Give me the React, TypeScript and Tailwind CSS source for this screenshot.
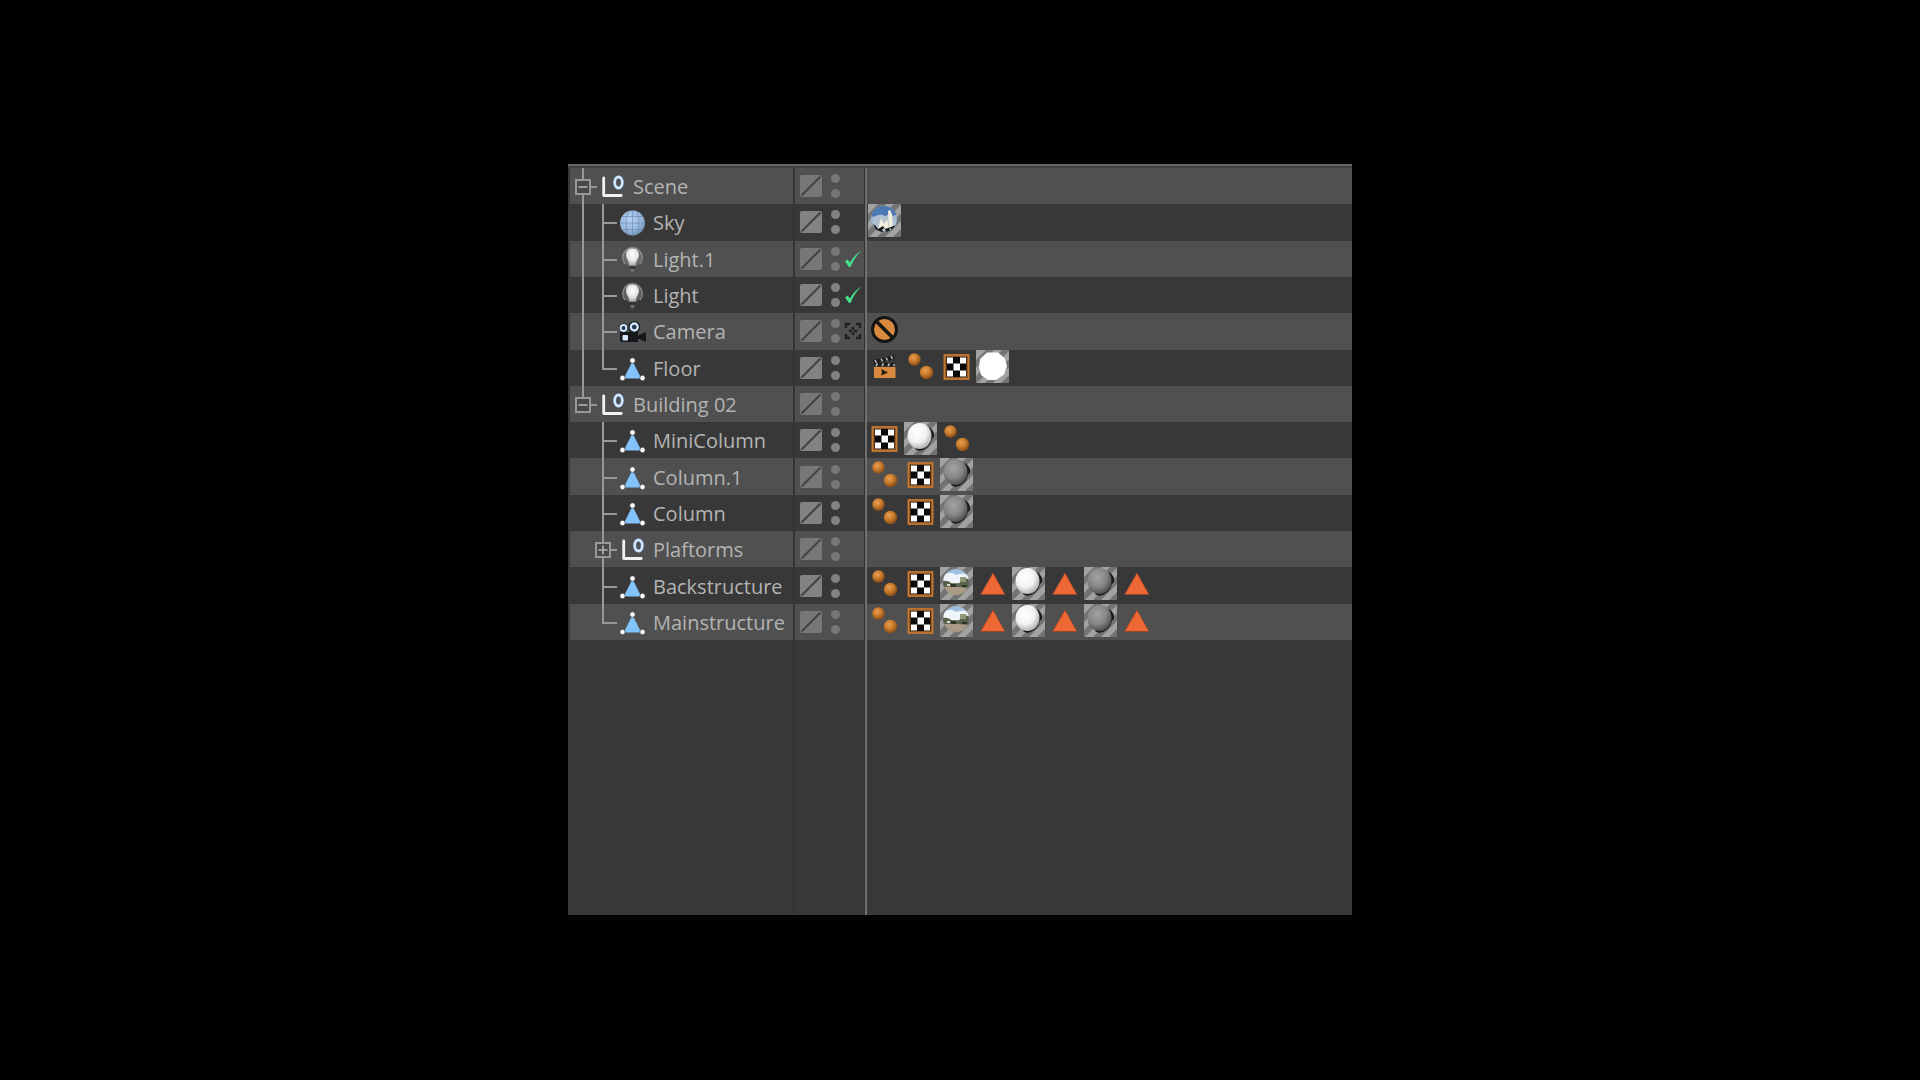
import { useId } from "react";

type Tag = "compositing" | "phong" | "uvw" | "white" | "matte" | "grey" | "env" | "sky" | "selection" | "protection";
type Icon = "null" | "sky" | "light" | "camera" | "polygon";
type Guide = "none" | "line" | "tee" | "end";
type Item = {
  name: string;
  icon: Icon;
  guides: Guide[];
  expander?: "open" | "closed";
  state?: "check" | "target";
  tags: Tag[];
};

const items: Item[] = [
  { name: "Scene", icon: "null", guides: ["line"], expander: "open", tags: [] },
  { name: "Sky", icon: "sky", guides: ["line", "tee"], tags: ["sky"] },
  { name: "Light.1", icon: "light", guides: ["line", "tee"], state: "check", tags: [] },
  { name: "Light", icon: "light", guides: ["line", "tee"], state: "check", tags: [] },
  { name: "Camera", icon: "camera", guides: ["line", "tee"], state: "target", tags: ["protection"] },
  { name: "Floor", icon: "polygon", guides: ["line", "end"], tags: ["compositing", "phong", "uvw", "white"] },
  { name: "Building 02", icon: "null", guides: ["end"], expander: "open", tags: [] },
  { name: "MiniColumn", icon: "polygon", guides: ["none", "tee"], tags: ["uvw", "matte", "phong"] },
  { name: "Column.1", icon: "polygon", guides: ["none", "tee"], tags: ["phong", "uvw", "grey"] },
  { name: "Column", icon: "polygon", guides: ["none", "tee"], tags: ["phong", "uvw", "grey"] },
  { name: "Plaftorms", icon: "null", guides: ["none", "line"], expander: "closed", tags: [] },
  { name: "Backstructure", icon: "polygon", guides: ["none", "tee"], tags: ["phong", "uvw", "env", "selection", "matte", "selection", "grey", "selection"] },
  { name: "Mainstructure", icon: "polygon", guides: ["none", "end"], tags: ["phong", "uvw", "env", "selection", "matte", "selection", "grey", "selection"] },
];

function ObjectIcon({ icon }: { icon: Icon }) {
  const id = useId();
  return (
    <svg className="size-[26px] shrink-0 overflow-visible" viewBox="0 0 26 26" aria-hidden="true">
      {icon === "null" && (
        <>
          <path d="M4.700 4v17.500h17.500" fill="none" stroke="#f2f2f2" strokeWidth="2.800" strokeLinecap="round" strokeLinejoin="round" />
          <ellipse cx="19.500" cy="8.500" rx="4" ry="5.600" fill="none" stroke="#3b5878" strokeWidth="4.400" opacity="0.45" />
          <ellipse cx="19.500" cy="8.500" rx="3.800" ry="5.500" fill="none" stroke="#cfe6ff" strokeWidth="2.800" />
        </>
      )}
      {icon === "sky" && (
        <>
          <defs>
            <radialGradient id={id} cx="0.4" cy="0.35" r="0.7">
              <stop offset="0" stopColor="#b8d1ee" />
              <stop offset="0.65" stopColor="#96b6db" />
              <stop offset="1" stopColor="#6d8db3" />
            </radialGradient>
          </defs>
          <circle cx="13.500" cy="13" r="12.500" fill={`url(#${id})`} />
          <path d="M13.500 .5v25M1 13h25M3 6.500h21M3 19.500h21M9 1.500q-4 11.500 0 23M18 1.500q4 11.500 0 23" fill="none" stroke="#6487b0" strokeWidth="1" opacity="0.6" />
        </>
      )}
      {icon === "light" && (
        <>
          <defs>
            <radialGradient id={id} cx="0.5" cy="0.35" r="0.65">
              <stop offset="0" stopColor="#ffffff" />
              <stop offset="0.6" stopColor="#e6e6e6" />
              <stop offset="1" stopColor="#a8a8a8" />
            </radialGradient>
          </defs>
          <circle cx="13.500" cy="9.500" r="10" fill="#858585" opacity="0.5" />
          <path d="M6 17a9.800 9.800 0 1 1 15 0" fill="none" stroke="#a0a0a0" strokeWidth="1.200" opacity="0.8" />
          <path d="M13.500 1.500c-4 0-6.500 2.800-6.500 6.200 0 4 3 5.500 3.200 10.800h6.600c.2-5.300 3.200-6.800 3.200-10.800 0-3.400-2.500-6.200-6.500-6.200z" fill={`url(#${id})`} />
          <path d="M10.500 19.500h6v2h-6z" fill="#303030" />
          <path d="M11 22h5l-1.500 3.500h-2z" fill="#6d6d6d" />
        </>
      )}
      {icon === "camera" && (
        <>
          <path d="M1 13h18v10H3q-2 0-2-2zM19 16.500l8-3.500v10l-8-3.500z" fill="#16181c" />
          <circle cx="4.500" cy="9" r="4.600" fill="#17191d" />
          <circle cx="15.300" cy="8" r="6" fill="#17191d" />
          <circle cx="4.500" cy="9" r="2.900" fill="#24354c" stroke="#cfe3fa" strokeWidth="2" />
          <circle cx="15.300" cy="8" r="3.500" fill="#24354c" stroke="#cfe3fa" strokeWidth="2.300" />
          <rect x="3.500" y="16" width="5.500" height="5.500" rx="1" fill="#d8e9fb" />
        </>
      )}
      {icon === "polygon" && (
        <>
          <path d="M13.500 6 21.500 22h-16z" fill="#82c3fb" stroke="#82c3fb" strokeWidth="1" strokeLinejoin="round" />
          <circle cx="13.500" cy="4.500" r="2.700" fill="#fff" stroke="#262626" strokeWidth="0.600" />
          <circle cx="3.500" cy="22" r="2.700" fill="#fff" stroke="#262626" strokeWidth="0.600" />
          <circle cx="23.500" cy="22" r="2.700" fill="#fff" stroke="#262626" strokeWidth="0.600" />
        </>
      )}
    </svg>
  );
}

function MaterialBall({ kind }: { kind: Tag }) {
  const id = useId();
  const clip = `${id}-clip`;
  const light = kind === "matte";
  return (
    <>
      <defs>
        <radialGradient id={id} cx="0.4" cy="0.35" r="0.65">
          <stop offset="0" stopColor={light ? "#ffffff" : "#a2a2a2"} />
          <stop offset="0.6" stopColor={light ? "#f2f2f2" : "#868686"} />
          <stop offset="1" stopColor={light ? "#b4b4b4" : "#525252"} />
        </radialGradient>
        <clipPath id={clip}>
          <circle cx="16" cy="15" r="13" />
        </clipPath>
      </defs>
      <rect width="33" height="33" fill="#a2a2a2" />
      <path d="M0 10 10 0h8L0 18zM0 26 26 0h7v1L1 33H0zM9 33 33 9v8L17 33zM25 33l8-8v8z" fill="#747474" />
      {kind === "white" && <path d="M11 2.500h11l7 6 2 8-3 8-8 5.500h-8L5 25 3 17l1-8z" fill="#fff" />}
      {(kind === "matte" || kind === "grey") && (
        <>
          <path d="M25 5q6 4 5 10l-2 2q-2 8-9 11-5 2-8-1z" fill="#1a1a1a" />
          <ellipse cx="15.500" cy="14" rx="12" ry="13" fill={`url(#${id})`} />
        </>
      )}
      {kind === "env" && (
        <g clipPath={`url(#${clip})`}>
          <rect width="33" height="33" fill="#87806f" />
          <path d="M0 0h33v15H0z" fill="#9fbee0" />
          <path d="M3 9q7-6 13-1 8-4 14 2l-2 6H4z" fill="#eef4f8" />
          <path d="M3 14q6-1 10 4l6-1 3-6 8 1 1 7-8 3-12-2-8 1z" fill="#56614a" />
          <path d="M4 20q10-1 24 1l-5 8H10z" fill="#ab9a86" />
          <path d="M20 10h6v5h-6z" fill="#8d9a74" />
          <path d="M11 17h5v3h-5zM22 18h5v2h-5z" fill="#30342a" />
          <path d="M7 17h3v2H7z" fill="#d7dbd2" />
        </g>
      )}
      {kind === "sky" && (
        <g clipPath={`url(#${clip})`}>
          <rect width="33" height="33" fill="#9fb6cf" />
          <path d="M0 0h33v10Q17 14 0 12z" fill="#4a78b5" />
          <path d="M5 14q6-6 12-2l5-2 6 5v8H5z" fill="#aebfce" />
          <path d="m10 25 3-11 3 6 3-5 2 10zM20 7l2-1 2 4 1 14h-4z" fill="#f1eddc" />
          <path d="M5 20q4 2 5 5l5-3 2 3 6-2 5-2-3 8H9z" fill="#15191e" />
          <path d="m14 26 2-2 2 3-2 1zM21 25l2-1v3z" fill="#cfcfc9" />
        </g>
      )}
    </>
  );
}

function TagIcon({ kind }: { kind: Tag }) {
  const id = useId();
  const ball = kind === "white" || kind === "matte" || kind === "grey" || kind === "env" || kind === "sky";
  return (
    <svg className="size-[33px] shrink-0" viewBox="0 0 33 33" role="img" aria-label={kind}>
      {ball && <MaterialBall kind={kind} />}
      {kind === "phong" && (
        <>
          <defs>
            <radialGradient id={id} cx="0.4" cy="0.35" r="0.65">
              <stop offset="0" stopColor="#e89e50" />
              <stop offset="0.5" stopColor="#cb7c2f" />
              <stop offset="1" stopColor="#874c16" />
            </radialGradient>
          </defs>
          <circle cx="10.500" cy="9.500" r="6.200" fill={`url(#${id})`} />
          <circle cx="22.500" cy="22.500" r="6.700" fill={`url(#${id})`} />
        </>
      )}
      {kind === "uvw" && (
        <>
          <rect x="3.500" y="4" width="26" height="26" rx="1" fill="#8a5320" />
          <rect x="4.500" y="5" width="24" height="24" fill="none" stroke="#c27a38" strokeWidth="1.600" />
          <rect x="6.500" y="7" width="20" height="20" fill="#0a0a0a" />
          <path d="M7 7.500h6v6H7zM20 7.500h6v6h-6zM13.500 13.500h6.500V20.500h-6.500zM7 20.500h6v6H7zM20 20.500h6v6h-6z" fill="#fff" />
        </>
      )}
      {kind === "selection" && <path d="M17 6 29 27.500H4.500z" fill="#ee6835" stroke="#8f4128" strokeWidth="0.800" />}
      {kind === "protection" && (
        <>
          <circle cx="16.500" cy="16.500" r="12" fill="#d98a3e" stroke="#151515" strokeWidth="3" />
          <path d="m8.500 8.500 16 16" stroke="#151515" strokeWidth="3.500" />
        </>
      )}
      {kind === "compositing" && (
        <>
          <path d="M6 17h21.500v11H6z" fill="#d98a3e" />
          <path d="m13 19 7 3.500-7 3 1-3z" fill="#231a12" />
          <path d="m5 10 21-5 1 4-21 5zM6 13h21v3H6z" fill="#1c1c1c" />
          <path d="m7 10 1.500 3M13 8.500l1.500 3M18 7.500l1.500 3M23 6l1.500 3M8 16l1.500-2.500M14 16l1.500-2.500M20 16l1.500-2.500M25.500 16l1-2" stroke="#c0c0c0" strokeWidth="1.500" />
        </>
      )}
    </svg>
  );
}

function GuideCell({ guide, branch, expander, name }: { guide: Guide; branch: boolean; expander?: Item["expander"]; name: string }) {
  return (
    <span className="relative flex w-5 shrink-0 items-center justify-center self-stretch">
      {(guide === "line" || guide === "tee") && <span className="absolute inset-y-0 left-[9px] w-0.5 bg-[#989898]" />}
      {guide === "end" && <span className="absolute top-0 bottom-1/2 left-[9px] w-0.5 bg-[#989898]" />}
      {branch && <span className="absolute top-1/2 left-[9px] h-0.5 w-[15px] bg-[#989898]" />}
      {expander && (
        <button
          type="button"
          aria-label={`${expander === "open" ? "Collapse" : "Expand"} ${name}`}
          className="relative top-px flex size-4 shrink-0 items-center justify-center border-2 border-[#989898] bg-[#484848]"
        >
          <svg viewBox="0 0 12 12" className="size-3 shrink-0" aria-hidden="true">
            <path d={expander === "open" ? "M1.500 6h9" : "M1.500 6h9M6 1.500v9"} stroke="#b4b4b4" strokeWidth="1.600" />
          </svg>
        </button>
      )}
    </span>
  );
}

function StateMark({ state }: { state: "check" | "target" }) {
  return (
    <button type="button" aria-label={state === "check" ? "Enabled" : "Active camera"} className="ml-1 size-[18px] shrink-0">
      <svg viewBox="0 0 18 18" className="size-full" aria-hidden="true">
        {state === "check" ? (
          <path d="M1 11.500 3.500 9.500 6 12.500Q10 5 17.500.500 10.500 7 6.500 17h-1.500z" fill="#45e08c" />
        ) : (
          <path d="M2 6V2h4M12 2h4v4M16 12v4h-4M6 16H2v-4M9 5v3M9 10v3M5 9h3M10 9h3" fill="none" stroke="#202020" strokeWidth="2.400" />
        )}
      </svg>
    </button>
  );
}

export default function App() {
  return (
    <main className="flex min-h-screen items-start justify-center bg-black pt-41 font-['Open_Sans',sans-serif]">
      <section aria-label="Object manager" className="flex min-h-[751px] w-full max-w-[784px] flex-col border-t-2 border-[#666666] bg-[#383838]">
        <div className="h-0.5 bg-[#404040]" />
        <div className="relative grow">
          <div className="absolute inset-y-0 left-[225px] w-0.5 bg-[#343434]" />
          <ul className="grid h-[472px] auto-rows-fr">
            {items.map((item) => (
              <li key={item.name} className="group flex items-stretch pl-0.5">
                <div className="flex w-[223px] shrink-0 items-center pl-[3px] group-odd:bg-[#505050]">
                  {item.guides.map((guide, i) => (
                    <GuideCell
                      key={i}
                      guide={guide}
                      branch={i === item.guides.length - 1}
                      expander={i === item.guides.length - 1 ? item.expander : undefined}
                      name={item.name}
                    />
                  ))}
                  <span className="flex items-center gap-2 pt-0.5 pl-1.5">
                    <ObjectIcon icon={item.icon} />
                    <span className="text-[20px] leading-6 whitespace-nowrap text-[#b4b4b4]">{item.name}</span>
                  </span>
                </div>
                <div className="ml-0.5 flex w-[69px] shrink-0 items-center pl-[5px] text-[#828282] group-odd:bg-[#505050] group-odd:text-[#777777]">
                  <button type="button" aria-label={`Layer of ${item.name}`} className="size-[22px] shrink-0">
                    <svg viewBox="0 0 22 22" className="size-full" aria-hidden="true">
                      <rect width="22" height="22" rx="2" fill="currentColor" />
                      <path d="M1.500 20.500 20.500 1.500" stroke="#424242" strokeWidth="2" />
                    </svg>
                  </button>
                  <button type="button" aria-label={`Visibility of ${item.name}`} className="ml-2 flex w-2.5 shrink-0 flex-col gap-1.5">
                    <span className="mx-auto size-[9px] rounded-full bg-current" />
                    <span className="mx-auto size-[9px] rounded-full bg-current" />
                  </button>
                  {item.state && <StateMark state={item.state} />}
                </div>
                <div className="ml-[3px] flex grow items-start gap-[3px] pl-px group-odd:bg-[#505050]">
                  {item.tags.map((tag, i) => (
                    <TagIcon key={i} kind={tag} />
                  ))}
                </div>
              </li>
            ))}
          </ul>
          <div className="absolute inset-y-0 left-[296px] w-[3px] border-l border-[#303030] bg-[#707070]" />
        </div>
      </section>
    </main>
  );
}
